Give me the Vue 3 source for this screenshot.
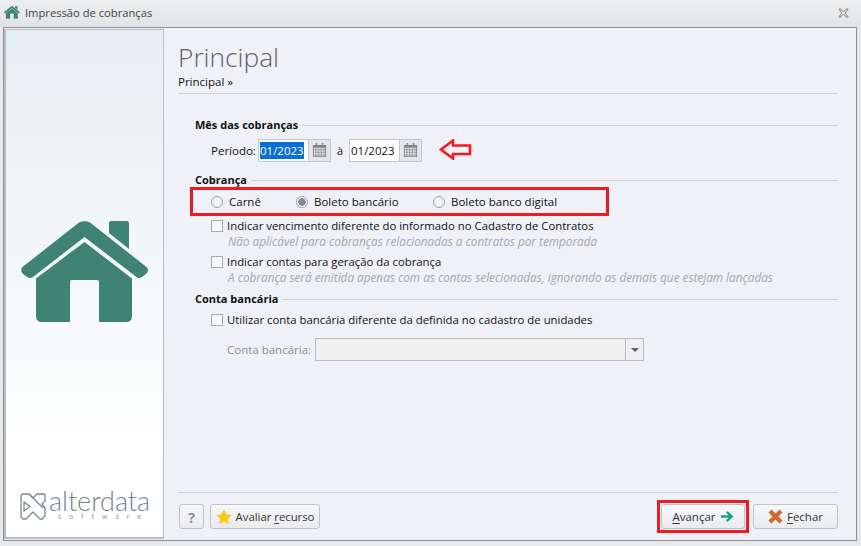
<script setup>
const sections = [
  { label: 'Indicar vencimento diferente do informado no Cadastro de Contratos', hint: 'Não aplicável para cobranças relacionadas a contratos por temporada' },
  { label: 'Indicar contas para geração da cobrança', hint: 'A cobrança será emitida apenas com as contas selecionadas, ignorando as demais que estejam lançadas' },
]
</script>

<template>
  <div class="window">
    <header class="titlebar">
      <svg class="title-icon" viewBox="0 0 128 102"><use href="#house" /></svg>
      <span class="title-text">Impressão de cobranças</span>
      <svg class="close" viewBox="0 0 12 12" preserveAspectRatio="none"><path d="M1 1.500 2 .8 6 4.400 10 .8 11 1.500 7.600 6 11 10.500 10 11.200 6 7.600 2 11.200 1 10.500 4.400 6Z" fill="#fff" stroke="#555" stroke-width=".9" /></svg>
    </header>
    <div class="frame">
      <aside class="side">
        <svg class="house" viewBox="0 0 128 102">
          <g id="house" fill="#3f8372">
            <path d="M58 1.500Q63.500-1 69 1.500L125.500 46Q128.500 49 125.500 52.500L121 56Q118 58 115.500 56L63.500 16 12 56Q9 58 6 56L1.500 52.500Q-1 49 1.500 46Z" />
            <path d="M88 2Q88 0 90 0H106Q108 0 108 2V28L88 12Z" />
            <path d="M63.500 21 111 57.500V95Q111 101 105 101H78V61Q78 59 76 59H51Q49 59 49 61V101H21Q15 101 15 95V57.500Z" />
          </g>
        </svg>
        <div class="logo">
          <svg class="logo-mark" viewBox="0 0 26 27" fill="none" stroke="#7a8894" stroke-width="1.300" stroke-linejoin="round">
            <path d="M2 1H9L13 5 17 1H24L25 2V8L22 11 25 15V23L22 26H20L13 19 6 26H3L1 24V3Z" />
            <path d="M9 1 23 15M4 9V18L10 13.500Z" />
          </svg>
          <div class="logo-text">
            <span class="logo-name">alterdata</span>
            <span class="logo-sub">software</span>
          </div>
        </div>
      </aside>
      <main class="main">
        <h1 class="heading">Principal</h1>
        <div class="crumb">Principal »</div>
        <div class="rule"></div>

        <div class="group first"><b>Mês das cobranças</b><i></i></div>
        <div class="period">
          <span class="period-label">Período:</span>
          <div class="date">
            <span class="date-input"><span class="selected">01/2023</span></span>
            <span class="date-btn"><svg viewBox="0 0 16 16"><use href="#cal" /></svg></span>
          </div>
          <span class="to">à</span>
          <div class="date">
            <span class="date-input">01/2023</span>
            <span class="date-btn">
              <svg viewBox="0 0 16 16">
                <g id="cal" fill="#7f8587">
                  <path d="M1 2H15V15H1ZM2 5V14H14V5Z" />
                  <path d="M3 6h2v2H3zM6 6h2v2H6zM9 6h2v2H9zM12 6h1.500v2H12zM3 9h2v2H3zM6 9h2v2H6zM9 9h2v2H9zM12 9h1.500v2H12zM3 12h2v1.500H3zM6 12h2v1.500H6zM9 12h2v1.500H9zM12 12h1.500v1.500H12zM4 0h1.500v3H4zM10.500 0H12v3h-1.500z" />
                </g>
              </svg>
            </span>
          </div>
          <svg class="arrow" viewBox="0 0 33 21"><path d="M2 10.500 14 1.500V6.500H31V15H14V19.500Z" fill="none" stroke="#ed1c24" stroke-width="2.600" /></svg>
        </div>

        <div class="group second"><b>Cobrança</b><i></i></div>
        <div class="radios">
          <label class="radio r1"><span class="dot"></span>Carnê</label>
          <label class="radio r2"><span class="dot on"></span>Boleto bancário</label>
          <label class="radio r3"><span class="dot"></span>Boleto banco digital</label>
        </div>

        <div v-for="s in sections" :key="s.label" class="option">
          <div class="check-row"><span class="box"></span>{{ s.label }}</div>
          <div class="hint">{{ s.hint }}</div>
        </div>

        <div class="group third"><b>Conta bancária</b><i></i></div>
        <div class="check-row solo"><span class="box"></span>Utilizar conta bancária diferente da definida no cadastro de unidades</div>
        <div class="account">
          <span class="account-label">Conta bancária:</span>
          <div class="select"><span class="select-value"></span><span class="select-btn"><em></em></span></div>
        </div>

        <footer class="footer">
          <button class="btn help">?</button>
          <button class="btn rate">
            <svg viewBox="0 0 16 16"><path d="M8 .5 10.300 5.400 15.600 6.100 11.700 9.800 12.700 15.200 8 12.600 3.300 15.200 4.300 9.800.4 6.100 5.700 5.400Z" fill="#fdc90f" /></svg>
            Avaliar <span><u>r</u>ecurso</span>
          </button>
          <span class="spacer"></span>
          <div class="next-wrap">
            <button class="btn next"><span><u>A</u>vançar</span>
              <svg viewBox="0 0 13 11"><path d="M0 4.300H7.500L5 1.500 6.500 0 12.500 5.500 6.500 11 5 9.500 7.500 6.700H0Z" fill="#1fa08a" /></svg>
            </button>
          </div>
          <button class="btn closebtn">
            <svg viewBox="0 0 15 15"><path d="M3.500.5 7.500 4.500 11.500.5 14.500 3.500 10.500 7.500 14.500 11.500 11.500 14.500 7.500 10.500 3.500 14.500.5 11.500 4.500 7.500.5 3.500Z" fill="#cf6a2e" /></svg>
            <span><u>F</u>echar</span>
          </button>
        </footer>
      </main>
    </div>
  </div>
</template>

<style>
html, body { margin: 0; background: #e7e9eb; }
</style>

<style scoped>
.window { width: 861px; height: 546px; display: flex; flex-direction: column; box-sizing: border-box; padding: 0 4px 5px 3px; font: 11.5px "Open Sans", "Noto Sans", sans-serif; color: #111; background: #e7e9eb; overflow: hidden; }
.titlebar { height: 27px; margin: 0 -4px 0 -3px; padding: 0 0 2px 4px; box-sizing: border-box; display: flex; align-items: center; background: linear-gradient(#eceef0, #e1e3e5); flex: none; }
.title-icon { width: 16px; height: 13px; margin-right: 5px; }
.title-text { color: #444; font-size: 11.2px; }
.close { width: 11px; height: 10px; margin-left: auto; margin-right: 12px; }
.frame { flex: 1; display: flex; border: 1px solid #8b9094; background: #eff1f6; min-height: 0; }
.side { width: 157px; flex: none; display: flex; flex-direction: column; align-items: center; margin: 1px 0; padding: 0; border: 1px solid #b9bdc2; border-left-width: 2px; border-bottom-width: 2px; background: linear-gradient(#e7eef1, #fff 85%); }
.house { width: 128px; height: 102px; margin-top: 191px; display: block; }
.logo { margin-top: auto; margin-bottom: 17px; display: flex; align-items: center; gap: 3px; margin-left: 1px; }
.logo-mark { width: 26px; height: 27px; }
.logo-text { display: flex; flex-direction: column; align-items: center; }
.logo-name { font: 300 27px/16px "Lato", sans-serif; color: #76838f; }
.logo-sub { font: 400 7px/8px "Lato", sans-serif; color: #8a96a0; letter-spacing: 8px; margin: 3px -8px 0 0; }
.main { flex: 1; min-width: 0; display: flex; flex-direction: column; padding: 0 18px 11px 14px; }
.heading { margin: 12px 0 0; font: 300 26.3px/34px "Open Sans", sans-serif; color: #5f6165; }
.crumb { font-size: 11.5px; line-height: 16px; margin-top: 0; }
.rule { height: 1px; background: #cfd1d5; margin-top: 3px; }
.group { display: flex; align-items: center; gap: 4px; margin-left: 17px; line-height: 16px; }
.group b { font-weight: 700; font-size: 11px; white-space: nowrap; }
.group i { flex: 1; height: 1px; background: #cfd2d8; }
.first { margin-top: 23px; }
.second { margin-top: 10px; }
.third { margin-top: 6px; }
.period { display: flex; align-items: center; height: 23px; margin-top: 6px; margin-left: 33px; position: relative; }
.period-label { width: 48px; margin-right: -1px; }
.to { width: 18px; text-align: center; }
.date { display: flex; height: 23px; box-sizing: border-box; border: 1px solid #c3c6cb; background: #e3e5e8; }
.date-input { width: 50px; box-sizing: border-box; background: #fff; padding: 2px 0 0 1px; line-height: 18px; border-right: 1px solid #c3c6cb; }
.selected { background: #0a6fd0; color: #fff; padding: 1px 0; }
.date-btn { width: 21px; display: flex; align-items: center; justify-content: center; }
.date-btn svg { width: 15px; height: 15px; }
.arrow { position: absolute; left: 228px; top: 0; width: 33px; height: 21px; }
.radios { display: flex; align-items: center; height: 23px; margin: -1px 0 0 12px; width: 413px; border: 3px solid #ed1c24; }
.radio { display: flex; align-items: center; gap: 6px; }
.r1 { margin-left: 18px; width: 85px; }
.r2 { width: 137px; }
.dot { width: 12px; height: 12px; box-sizing: border-box; border: 1px solid #a0a3a7; border-radius: 50%; background: radial-gradient(#fdfdfd, #e6e7e9); flex: none; }
.dot.on { background: radial-gradient(circle, #85878c 0 3.5px, #f5f5f6 4px); }
.option { margin-left: 33px; margin-top: 2px; }
.option + .option { margin-top: 5px; }
.check-row { display: flex; align-items: center; height: 15px; white-space: nowrap; font-size: 11.35px; }
.box { width: 12px; height: 12px; box-sizing: border-box; border: 1px solid #a8abb0; background: linear-gradient(135deg, #f2f3f5, #fff); margin-right: 4px; flex: none; }
.hint { font-style: italic; color: #a5a7aa; line-height: 16px; margin-left: 17px; white-space: nowrap; font-size: 11.75px; }
.solo { margin-left: 33px; margin-top: 5px; }
.account { display: flex; align-items: center; margin-top: 11px; margin-left: 49px; }
.account-label { color: #8c8e90; width: 88px; }
.select { width: 329px; height: 23px; display: flex; box-sizing: border-box; border: 1px solid #b8bbbf; background: #efefef; }
.select-value { flex: 1; }
.select-btn { width: 17px; border-left: 1px solid #b8bbbf; display: flex; align-items: center; justify-content: center; }
.select-btn em { width: 0; height: 0; border: 4px solid transparent; border-top: 4px solid #5c6166; border-bottom: 0; }
.footer { margin-top: auto; border-top: 1px solid #cfd1d5; padding-top: 11px; display: flex; align-items: center; height: 25px; }
.btn { height: 25px; box-sizing: border-box; border: 1px solid #bfc2c6; border-radius: 3px; background: linear-gradient(#f7f8f9, #e9ebee); font: inherit; color: #333; display: flex; align-items: center; justify-content: center; padding: 0; white-space: nowrap; }
.help { width: 25px; margin-left: 1px; font: 700 15px "Open Sans", sans-serif; color: #8b9499; }
.rate { width: 110px; margin-left: 6px; gap: 4px; font-size: 11.3px; }
.rate svg { width: 16px; height: 16px; }
.rate span { margin-left: -1px; }
.spacer { flex: 1; }
.next-wrap { border: 3px solid #ed1c24; padding: 1px; display: flex; margin-right: 4px; }
.next { width: 84px; gap: 5px; }
.next svg { width: 13px; height: 11px; }
.closebtn { width: 85px; gap: 4px; }
.closebtn svg { width: 15px; height: 15px; }
u { text-underline-offset: 2px; }
</style>
